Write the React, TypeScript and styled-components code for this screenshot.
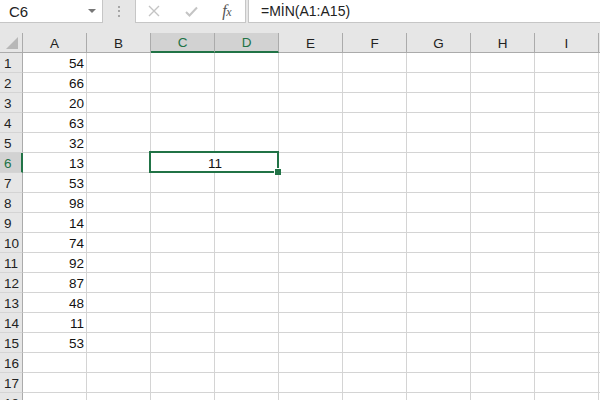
import React from "react";
import styled, { createGlobalStyle, css } from "styled-components";

const green = "#217346";
const headerGray = "#e6e6e6";
const headerSelected = "#d2d2d2";
const headerLine = "#ababab";
const gridLine = "#d4d4d4";

const GlobalStyle = createGlobalStyle`
  html, body {
    margin: 0;
    padding: 0;
    background: ${headerGray};
  }
  * {
    box-sizing: border-box;
  }
`;

const Page = styled.div`
  width: 600px;
  height: 400px;
  overflow: hidden;
  background: ${headerGray};
  font-family: "Liberation Sans", Arial, sans-serif;
  color: #1f1f1f;
`;

const FormulaBar = styled.div`
  display: flex;
  height: 23px;
  margin-bottom: 10px;
`;

const NameBox = styled.div`
  width: 103px;
  display: flex;
  align-items: center;
  justify-content: space-between;
  padding: 0 6px 0 9px;
  background: #fff;
  border-right: 1px solid #c6c6c6;
  border-bottom: 1px solid #c6c6c6;
  font-size: 15px;
  color: #222;
`;

const Caret = styled.span`
  width: 0;
  height: 0;
  border-left: 4px solid transparent;
  border-right: 4px solid transparent;
  border-top: 4px solid #777;
`;

const Grip = styled.div`
  width: 32px;
  display: flex;
  flex-direction: column;
  align-items: center;
  justify-content: center;
  gap: 2.5px;
  padding-bottom: 1px;
`;

const Dot = styled.span`
  width: 2px;
  height: 2px;
  background: #a6a6a6;
`;

const FnBox = styled.div`
  width: 111px;
  margin-right: 2px;
  display: flex;
  align-items: center;
  justify-content: space-between;
  padding: 0 14px 0 12px;
  background: #fff;
  border-left: 1px solid #c6c6c6;
  border-right: 1px solid #c6c6c6;
  border-bottom: 1px solid #c6c6c6;
`;

const Fx = styled.span`
  font-family: "Liberation Serif", "Times New Roman", serif;
  font-style: italic;
  font-size: 16px;
  color: #555;
  letter-spacing: -0.5px;

  & > small {
    font-size: 12px;
  }
`;

const FormulaInput = styled.div`
  flex: 1;
  display: flex;
  align-items: center;
  padding-left: 12px;
  background: #fff;
  border-left: 1px solid #c6c6c6;
  border-bottom: 1px solid #c6c6c6;
  font-size: 14px;
  color: #222;
`;

const Sheet = styled.div`
  display: grid;
  grid-template-columns: 23px repeat(9, 64px) 1fr;
  grid-auto-rows: 20px;
`;

const Corner = styled.div`
  display: flex;
  align-items: flex-end;
  justify-content: flex-end;
  padding: 0 4px 3px 0;
  background: ${headerGray};
  border-right: 1px solid ${headerLine};
  border-bottom: 1px solid ${headerLine};
`;

const CornerMark = styled.span`
  width: 12px;
  height: 12px;
  background: #b8b8b8;
  clip-path: polygon(100% 0, 100% 100%, 0 100%);
`;

const ColHeader = styled.div<{ $selected?: boolean }>`
  display: flex;
  align-items: center;
  justify-content: center;
  padding-top: 1px;
  font-size: 13.5px;
  background: ${headerGray};
  border-right: 1px solid ${headerLine};
  border-bottom: 1px solid ${headerLine};
  color: #222;

  ${(p) =>
    p.$selected &&
    css`
      background: ${headerSelected};
      border-bottom: 2px solid ${green};
      color: ${green};
    `}
`;

const RowHeader = styled.div<{ $selected?: boolean }>`
  display: flex;
  align-items: center;
  padding: 1px 0 0 4px;
  font-size: 13.5px;
  background: ${headerGray};
  border-right: 1px solid ${headerLine};
  border-bottom: 1px solid ${gridLine};
  color: #222;

  ${(p) =>
    p.$selected &&
    css`
      background: ${headerSelected};
      border-right: 2px solid ${green};
      color: ${green};
    `}
`;

const Cell = styled.div<{ $align?: "left" | "right" | "center"; $span?: number; $active?: boolean }>`
  display: flex;
  align-items: center;
  justify-content: ${(p) =>
    p.$align === "right" ? "flex-end" : p.$align === "center" ? "center" : "flex-start"};
  padding: 2px 2px 0 3px;
  grid-column: span ${(p) => p.$span ?? 1};
  font-size: 13.5px;
  background: #fff;
  border-right: 1px solid ${gridLine};
  border-bottom: 1px solid ${gridLine};
  color: #111;

  ${(p) =>
    p.$active &&
    css`
      position: relative;
      z-index: 2;
    `}
`;

const Selection = styled.div`
  position: absolute;
  top: -2px;
  left: -2px;
  right: -1px;
  bottom: -1px;
  border: 2px solid ${green};
  pointer-events: none;
`;

const FillHandle = styled.div`
  position: absolute;
  right: -3px;
  bottom: -3px;
  width: 7px;
  height: 7px;
  background: ${green};
  border-top: 1px solid #fff;
  border-left: 1px solid #fff;
`;

const columns = ["A", "B", "C", "D", "E", "F", "G", "H", "I", ""];
const selectedCols = ["C", "D"];
const values = [54, 66, 20, 63, 32, 13, 53, 98, 14, 74, 92, 87, 48, 11, 53];
const rowCount = 18;
const selectedRow = 6;

function CloseIcon() {
  return (
    <svg width="12" height="12" viewBox="0 0 12 12">
      <path d="M1 1 L11 11 M11 1 L1 11" stroke="#c4c4c4" strokeWidth="1.4" fill="none" />
    </svg>
  );
}

function CheckIcon() {
  return (
    <svg width="13" height="11" viewBox="0 0 13 11">
      <path d="M1 6 L4.5 9.5 L12 1.5" stroke="#c4c4c4" strokeWidth="2" fill="none" />
    </svg>
  );
}

function SheetRow({ row }: { row: number }) {
  const isSelected = row === selectedRow;
  const value = values[row - 1];

  return (
    <>
      <RowHeader $selected={isSelected}>{row}</RowHeader>
      <Cell $align="right">{value ?? ""}</Cell>
      <Cell />
      {isSelected ? (
        <Cell $align="center" $span={2} $active>
          11
          <Selection />
          <FillHandle />
        </Cell>
      ) : (
        <>
          <Cell />
          <Cell />
        </>
      )}
      {columns.slice(4).map((c, i) => (
        <Cell key={c + i} />
      ))}
    </>
  );
}

export default function App() {
  const rows = Array.from({ length: rowCount }, (_, i) => i + 1);

  return (
    <Page>
      <GlobalStyle />
      <FormulaBar>
        <NameBox>
          C6
          <Caret />
        </NameBox>
        <Grip>
          <Dot />
          <Dot />
          <Dot />
        </Grip>
        <FnBox>
          <CloseIcon />
          <CheckIcon />
          <Fx>
            f<small>x</small>
          </Fx>
        </FnBox>
        <FormulaInput>=MİN(A1:A15)</FormulaInput>
      </FormulaBar>
      <Sheet>
        <Corner>
          <CornerMark />
        </Corner>
        {columns.map((c, i) => (
          <ColHeader key={c + i} $selected={selectedCols.includes(c)}>
            {c}
          </ColHeader>
        ))}
        {rows.map((r) => (
          <SheetRow key={r} row={r} />
        ))}
      </Sheet>
    </Page>
  );
}
